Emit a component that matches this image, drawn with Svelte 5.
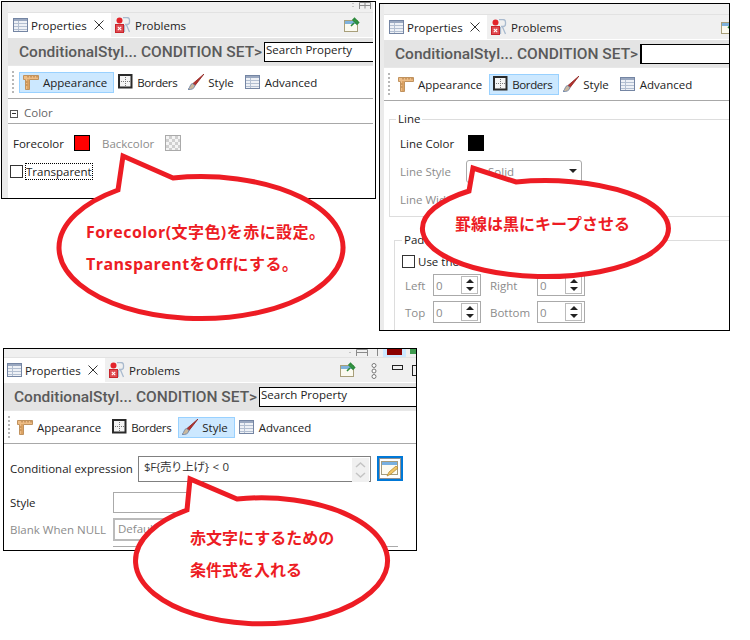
<script lang="ts">
	const tools = ['Appearance', 'Borders', 'Style', 'Advanced'];
</script>

{#snippet tableIcon()}
	<svg class="icon" viewBox="0 0 16 16">
		<rect x="0.500" y="1.500" width="14" height="13" fill="#eef1f6" stroke="#7485a3" />
		<rect x="1" y="2" width="13" height="2" fill="#9aa8c0" />
		<path d="M1 6.500h13M1 9.500h13M1 12.500h13M5.500 4v10" stroke="#b3bfd1" fill="none" />
	</svg>
{/snippet}

{#snippet problemsIcon()}
	<svg class="icon" viewBox="0 0 16 16">
		<path d="M8 0.500h4a2.500 2.500 0 0 1 2.500 2.500v2a2.500 2.500 0 0 1-2.500 2.500H10M11.500 8l3 7M9.500 8v7" fill="none" stroke="#a9bace" stroke-width="1.300" />
		<circle cx="4.500" cy="3.500" r="3" fill="#e3242b" />
		<rect x="0.500" y="7.500" width="8" height="8" fill="#e04a50" stroke="#c8252c" />
		<path d="M2.800 9.800l3.400 3.400M6.200 9.800l-3.400 3.400" stroke="#fff" stroke-width="1.100" />
	</svg>
{/snippet}

{#snippet closeIcon()}
	<svg class="close" viewBox="0 0 10 10"><path d="M0.500 0.500l9 9M9.500 0.500l-9 9" stroke="#333" fill="none" /></svg>
{/snippet}

{#snippet pinIcon()}
	<svg class="icon pin" viewBox="0 0 16 16">
		<rect x="0.500" y="3.500" width="13" height="11" fill="#fbfaf0" stroke="#a89f7a" />
		<rect x="1" y="4" width="12" height="3" fill="#7fb2dc" />
		<path d="M7 9l3-3 M9 3l4 4 1.500-1.500-4-4z" stroke="#2c8a3c" stroke-width="1.600" fill="#3aa24c" />
	</svg>
{/snippet}

{#snippet rulerIcon()}
	<svg class="icon" viewBox="0 0 16 16">
		<path d="M0.500 1.500h15v4h-9v10h-4v-10h-2z" fill="#eebd86" stroke="#c0925e" />
		<path d="M5 2v1.500M8 2v1.500M11 2v1.500M14 2v1.500M3 8h1.500M3 11h1.500" stroke="#a8743e" fill="none" />
		<path d="M5 5v10" stroke="#c98a45" fill="none" />
	</svg>
{/snippet}

{#snippet bordersIcon()}
	<svg class="icon" viewBox="0 0 16 16">
		<rect x="1" y="1" width="12.500" height="12.500" fill="#f4f4f4" stroke="#2a2a2a" stroke-width="2" />
		<path d="M7.500 3v9M3 7.500h9" stroke="#777" stroke-dasharray="1 1" fill="none" />
	</svg>
{/snippet}

{#snippet brushIcon()}
	<svg class="icon" viewBox="0 0 16 16">
		<path d="M16 0L5 9.500l2 2z" fill="#b5322e" stroke="#8d2320" stroke-width="0.800" />
		<path d="M4.500 9.500c-2.500 0.500-2 3.500-4.500 6 3.500 0.500 6.500-1 7-4z" fill="#c9b79c" stroke="#6f86a8" stroke-width="0.900" />
	</svg>
{/snippet}

{#snippet penIcon()}
	<svg class="pen" viewBox="0 0 22 21">
		<rect x="0.500" y="0.500" width="21" height="20" fill="#fff" stroke="#222" stroke-dasharray="1 1" />
		<rect x="2.500" y="3.500" width="16" height="13" fill="#fdfcf2" stroke="#a59c7c" />
		<rect x="3" y="4" width="15" height="3" fill="#78b0e0" />
		<path d="M8 18l2-4 7-6 2 2-7 6z" fill="#f1c668" stroke="#b58b34" stroke-width="0.800" />
	</svg>
{/snippet}

{#snippet header(active: string)}
	<div class="tabs">
		<div class="tab">
			{@render tableIcon()}
			<span class="tab-label">Properties</span>
			{@render closeIcon()}
		</div>
		<div class="tab-off">
			{@render problemsIcon()}
			<span class="tab-label">Problems</span>
		</div>
		<div class="tab-actions">
			{@render pinIcon()}
		</div>
	</div>
	<div class="title">
		<span class="crumb">ConditionalStyl... CONDITION SET&gt;</span>
		<div class="search">{active === 'Borders' ? '' : 'Search Property'}</div>
	</div>
	<div class="toolbar">
		<span class="grip"></span>
		{#each tools as tool}
			<div class="tool" class:on={tool === active}>
				{#if tool === 'Appearance'}
					{@render rulerIcon()}
				{:else if tool === 'Borders'}
					{@render bordersIcon()}
				{:else if tool === 'Style'}
					{@render brushIcon()}
				{:else}
					{@render tableIcon()}
				{/if}
				<span class:tight={tool === 'Borders'}>{tool}</span>
			</div>
		{/each}
	</div>
{/snippet}

{#snippet spinner(label: string)}
	<span class="muted">{label}</span>
	<div class="spin">
		<span class="spin-val">0</span>
		<div class="spin-btns">
			<span class="arrow-up"></span>
			<span class="arrow-down"></span>
		</div>
	</div>
{/snippet}

<div class="canvas">
	<section class="panel appearance">
		<div class="inner">
			<div class="topstrip">
				<svg class="mini" viewBox="0 0 20 7"><path d="M1 1v1M1 4v1" stroke="#999" /><path d="M7.500 7V0.500h11V7M7.500 3.500h11M13 0.500v6" stroke="#8a8a8a" fill="none" /></svg>
			</div>
			{@render header('Appearance')}
			<div class="section"><span class="minus"></span><span>Color</span></div>
			<div class="color-row">
				<span>Forecolor</span>
				<span class="swatch red"></span>
				<span class="muted back">Backcolor</span>
				<span class="swatch checker"></span>
			</div>
			<div class="check-row">
				<span class="check"></span>
				<span class="focus">Transparent</span>
			</div>
		</div>
	</section>

	<section class="panel borders">
		<div class="inner">
			<div class="topstrip"></div>
			{@render header('Borders')}
			<fieldset class="group line">
				<legend>Line</legend>
				<div class="line-row"><span>Line Color</span><span class="swatch black"></span></div>
				<div class="line-row">
					<span class="muted">Line Style</span>
					<div class="select"><span>Solid</span><span class="arrow-down"></span></div>
				</div>
				<div class="line-row"><span class="muted">Line Width</span></div>
			</fieldset>
			<fieldset class="group padding">
				<legend>Padding</legend>
				<div class="check-row use"><span class="check"></span><span>Use the same</span></div>
				<div class="pad-grid">
					{@render spinner('Left')}
					{@render spinner('Right')}
					{@render spinner('Top')}
					{@render spinner('Bottom')}
				</div>
			</fieldset>
		</div>
	</section>

	<section class="panel style">
		<div class="inner">
			<div class="topstrip">
				<svg class="mini" viewBox="0 0 20 7"><path d="M1 3v1" stroke="#999" /><path d="M7.500 7V0.500h11V7M7.500 3.500h11" stroke="#8a8a8a" fill="none" /></svg>
				<span class="sep"></span>
				<span class="selected-mini"><span></span></span>
				<span class="green"></span>
			</div>
			<div class="view-actions">
				<svg class="kebab" viewBox="0 0 6 16"><circle cx="3" cy="2.500" r="2" /><circle cx="3" cy="8" r="2" /><circle cx="3" cy="13.500" r="2" /></svg>
				<span class="minimize"></span>
				<span class="maximize"></span>
			</div>
			{@render header('Style')}
			<div class="expr-row">
				<span class="expr-label">Conditional expression</span>
				<div class="expr-box">
					<span class="expr-text">$F{'{'}売り上げ{'}'} &lt; 0</span>
					<svg class="scroll" viewBox="0 0 17 24"><rect width="17" height="24" fill="#f0f0f0" /><path d="M4 9l4.500-4 4.500 4M4 15l4.500 4 4.500-4" stroke="#c4c4c4" stroke-width="1.500" fill="none" /></svg>
				</div>
				<div class="pen-btn">{@render penIcon()}</div>
			</div>
			<div class="prop-row style-row"><span class="prop-label">Style</span><div class="field"></div></div>
			<div class="prop-row blank-row"><span class="prop-label muted">Blank When NULL</span><div class="field combo">Default</div></div>
			<div class="field-last"></div>
		</div>
	</section>

	<div class="callout">
		<svg viewBox="0 0 750 640"><path d="M118 190L123 156L173 178A142 71 0 1 1 118 190Z" /></svg>
		<p class="say wide" style="left:86px;top:221px">Forecolor(文字色)を赤に設定。</p>
		<p class="say wide" style="left:86px;top:253px">TransparentをOffにする。</p>
	</div>
	<div class="callout">
		<svg viewBox="0 0 750 640"><path d="M469 191L473 168L516 182A123 48 0 1 1 469 191Z" /></svg>
		<p class="say" style="left:455px;top:213px">罫線は黒にキープさせる</p>
	</div>
	<div class="callout">
		<svg viewBox="0 0 750 640"><path d="M187 510L190 479L237 499A126 63 0 1 1 187 510Z" /></svg>
		<p class="say" style="left:190px;top:527px">赤文字にするための</p>
		<p class="say" style="left:190px;top:559px">条件式を入れる</p>
	</div>
</div>

<style>
	:global(body) {
		background: #fff;
	}

	.canvas {
		position: relative;
		width: 750px;
		height: 640px;
		overflow: hidden;
		font-family: 'Open Sans', 'Noto Sans CJK JP', sans-serif;
		font-size: 11.5px;
		color: #222;
	}

	.panel {
		position: absolute;
		box-sizing: border-box;
		background: #fff;
		border: 1px solid #000;
		overflow: hidden;
	}

	.appearance {
		left: 1px;
		top: 1px;
		width: 375px;
		height: 198px;
	}

	.borders {
		left: 379px;
		top: 3px;
		width: 351px;
		height: 328px;
	}

	.style {
		left: 3px;
		top: 348px;
		width: 414px;
		height: 203px;
	}

	.inner {
		position: relative;
		box-sizing: border-box;
		height: 100%;
		border-left: 6px solid #ebebeb;
		margin-right: 2px;
	}

	.borders .inner {
		border-left-width: 4px;
		margin-right: 0;
	}

	.style .inner {
		border-left-width: 0;
		margin-right: 0;
	}

	.topstrip {
		display: flex;
		justify-content: flex-end;
		align-items: flex-start;
		height: 10px;
		background: #f0f0f0;
		border-bottom: 1px solid #e2e2e2;
	}

	.style .topstrip {
		height: 8px;
	}

	.mini {
		width: 20px;
		height: 7px;
	}

	.appearance .mini {
		margin-right: 1px;
	}

	.sep {
		width: 1px;
		height: 7px;
		margin-left: 8px;
		background: #888;
	}

	.selected-mini {
		display: flex;
		box-sizing: border-box;
		width: 23px;
		height: 8px;
		margin-left: 5px;
		padding: 0 4px 2px;
		background: #cce8ff;
	}

	.selected-mini span {
		flex: 1;
		background: #8b0000;
	}

	.green {
		width: 6px;
		height: 5px;
		margin-left: 4px;
		background: #3f9a4f;
	}

	.tabs {
		display: flex;
		align-items: stretch;
		height: 24px;
		background: #f0f0f0;
	}

	.tab {
		display: flex;
		align-items: center;
		gap: 2px;
		box-sizing: border-box;
		width: 103px;
		padding: 0 7px 0 5px;
		background: #fff;
	}

	.style .tab {
		width: 101px;
		padding-left: 3px;
	}

	.tab-off {
		display: flex;
		align-items: center;
		gap: 4px;
		padding-left: 4px;
	}

	.tab-label {
		color: #222;
	}

	.tab-actions {
		display: flex;
		align-items: center;
		margin-left: auto;
		padding-right: 13px;
	}

	.borders .tab-actions {
		padding-right: 0;
		margin-right: -8px;
	}

	.style .tab-actions {
		padding-right: 60px;
	}

	.icon {
		flex: none;
		width: 16px;
		height: 16px;
	}

	.close {
		flex: none;
		width: 10px;
		height: 10px;
		margin-left: auto;
	}

	.title {
		display: flex;
		align-items: center;
		height: 27px;
		margin-top: 1px;
		padding-left: 11px;
		background: #e4e4e4;
	}

	.style .title {
		padding-left: 10px;
	}

	.crumb {
		width: 245px;
		flex: none;
		font-family: Roboto, sans-serif;
		font-size: 15.5px;
		font-weight: 500;
		color: #5a5a5a;
		white-space: nowrap;
	}

	.search {
		flex: 1;
		box-sizing: border-box;
		height: 20px;
		padding-left: 1px;
		background: #fff;
		border: 1px solid #000;
		border-right: none;
		line-height: 14px;
	}

	.borders .search {
		border-left-width: 2px;
	}

	.toolbar {
		display: flex;
		align-items: center;
		box-sizing: border-box;
		height: 34px;
		padding-left: 4px;
		border-top: 1px solid #e8e8e8;
		border-bottom: 1px solid #a8a8a8;
	}

	.grip {
		width: 2px;
		height: 22px;
		margin-right: 5px;
		background: repeating-linear-gradient(#b8b8b8 0 2px, transparent 2px 4px);
	}

	.borders .grip {
		margin-right: 4px;
	}

	.style .grip {
		margin-right: 3px;
	}

	.tool {
		display: flex;
		align-items: center;
		gap: 4px;
		box-sizing: border-box;
		height: 21px;
		padding: 0 6px 0 3px;
		border: 1px solid transparent;
	}

	.tool.on {
		background: #cce8ff;
		border-color: #99d1ff;
	}

	.tight {
		margin-left: -1px;
		letter-spacing: -0.4px;
	}

	.section {
		display: flex;
		align-items: center;
		gap: 6px;
		box-sizing: border-box;
		height: 25px;
		padding: 3px 0 0 2px;
		border-bottom: 1px solid #a8a8a8;
		color: #666;
	}

	.minus {
		position: relative;
		box-sizing: border-box;
		width: 8px;
		height: 8px;
		margin-top: 3px;
		border: 1px solid #555;
	}

	.minus::after {
		content: '';
		position: absolute;
		left: 1px;
		top: 2px;
		width: 4px;
		height: 1px;
		background: #333;
	}

	.color-row {
		display: flex;
		align-items: center;
		height: 16px;
		margin-top: 11px;
		padding-left: 5px;
	}

	.swatch {
		box-sizing: border-box;
		width: 16px;
		height: 16px;
		border: 1px solid #000;
	}

	.red {
		margin-left: 10px;
		background: #f00;
	}

	.black {
		background: #000;
	}

	.back {
		margin-left: 12px;
	}

	.checker {
		margin-left: 11px;
		border-color: #aaa;
		background: repeating-conic-gradient(#cfcfcf 0 25%, #f4f4f4 0 50%) 0 0 / 6px 6px;
	}

	.muted {
		color: #8c8c8c;
	}

	.check-row {
		display: flex;
		align-items: center;
		gap: 3px;
		margin-top: 13px;
		padding-left: 2px;
	}

	.check {
		flex: none;
		box-sizing: border-box;
		width: 13px;
		height: 13px;
		background: #fff;
		border: 1px solid #333;
	}

	.focus {
		outline: 1px dotted #000;
		line-height: 15px;
	}

	.group {
		box-sizing: border-box;
		min-width: 0;
		background: #fff;
		border: 1px solid #ddd;
		border-right: none;
	}

	.group legend {
		padding: 0 2px;
		line-height: 14px;
	}

	.line {
		height: 105px;
		margin: 11px 0 0 5px;
		padding: 5px 0 0 10px;
	}

	.line legend {
		margin-left: -4px;
	}

	.line-row {
		display: flex;
		align-items: center;
		gap: 10px;
		height: 24px;
		margin-bottom: 4px;
	}

	.line-row span:first-child {
		width: 58px;
	}

	.select {
		display: flex;
		align-items: center;
		justify-content: space-between;
		box-sizing: border-box;
		width: 116px;
		height: 23px;
		margin-left: -2px;
		padding: 0 4px 0 21px;
		border: 1px solid #aaa;
		border-radius: 3px;
		color: #8c8c8c;
	}

	.padding {
		height: 110px;
		margin: 16px 0 0 10px;
		padding: 0 0 0 7px;
	}

	.use {
		margin-top: 7px;
		padding-left: 0;
	}

	.pad-grid {
		display: grid;
		grid-template-columns: 28px 48px 56px 48px;
		align-items: center;
		row-gap: 5px;
		margin: 5px 0 0 3px;
	}

	.pad-grid > span:nth-child(4n + 3) {
		padding-left: 9px;
	}

	.spin {
		display: flex;
		align-items: center;
		justify-content: space-between;
		box-sizing: border-box;
		height: 22px;
		padding: 0 2px;
		border: 1px solid #aaa;
		color: #8c8c8c;
	}

	.spin-btns {
		display: flex;
		flex-direction: column;
		align-items: center;
		justify-content: space-around;
		box-sizing: border-box;
		width: 17px;
		height: 18px;
		border: 1px solid #bbb;
	}

	.arrow-up,
	.arrow-down {
		width: 0;
		height: 0;
		border-left: 4px solid transparent;
		border-right: 4px solid transparent;
	}

	.arrow-up {
		border-bottom: 4px solid #222;
	}

	.arrow-down {
		border-top: 4px solid #222;
	}

	.view-actions {
		position: absolute;
		top: 9px;
		left: 0;
		right: 0;
		height: 24px;
	}

	.kebab {
		position: absolute;
		left: 367px;
		top: 5px;
		width: 6px;
		height: 16px;
		fill: #fff;
		stroke: #777;
	}

	.minimize {
		position: absolute;
		left: 388px;
		top: 7px;
		width: 9px;
		height: 3px;
		border: 1px solid #222;
	}

	.maximize {
		position: absolute;
		left: 408px;
		top: 7px;
		width: 8px;
		height: 9px;
		border: 1px solid #222;
	}

	.expr-row {
		display: flex;
		align-items: center;
		height: 27px;
		margin-top: 11px;
		padding-left: 6px;
	}

	.expr-label {
		width: 128px;
		flex: none;
	}

	.expr-box {
		display: flex;
		justify-content: space-between;
		box-sizing: border-box;
		width: 233px;
		height: 26px;
		padding: 1px 1px 1px 5px;
		border: 1px solid #808080;
	}

	.expr-text {
		line-height: 18px;
		letter-spacing: -0.3px;
		word-spacing: 1px;
		color: #333;
	}

	.scroll {
		width: 17px;
		height: 24px;
		flex: none;
	}

	.pen-btn {
		display: flex;
		align-items: center;
		justify-content: center;
		box-sizing: border-box;
		width: 26px;
		height: 25px;
		margin-left: 6px;
		border: 2px solid #0078d7;
	}

	.pen {
		width: 22px;
		height: 21px;
	}

	.prop-row {
		display: flex;
		align-items: center;
		padding-left: 6px;
	}

	.prop-label {
		width: 103px;
		flex: none;
	}

	.style-row {
		margin-top: 10px;
	}

	.blank-row {
		margin-top: 5px;
	}

	.field {
		box-sizing: border-box;
		width: 100px;
		height: 21px;
		border: 1px solid #aaa;
	}

	.combo {
		height: 23px;
		padding-left: 3px;
		border-width: 2px;
		border-color: #bbb;
		line-height: 18px;
		color: #8c8c8c;
	}

	.field-last {
		width: 285px;
		height: 4px;
		margin: 5px 0 0 109px;
		border-top: 1px solid #aaa;
	}

	.callout {
		position: absolute;
		inset: 0;
		pointer-events: none;
	}

	.callout svg {
		position: absolute;
		left: 0;
		top: 0;
		width: 750px;
		height: 640px;
	}

	.callout path {
		fill: #fff;
		stroke: #ed1c24;
		stroke-width: 5;
	}

	.say {
		position: absolute;
		margin: 0;
		font-family: 'Open Sans', 'Noto Sans CJK JP', sans-serif;
		font-size: 16px;
		line-height: 22px;
		font-weight: 700;
		color: #ed1c24;
		white-space: nowrap;
	}

	.wide {
		letter-spacing: 0.45px;
	}
</style>
